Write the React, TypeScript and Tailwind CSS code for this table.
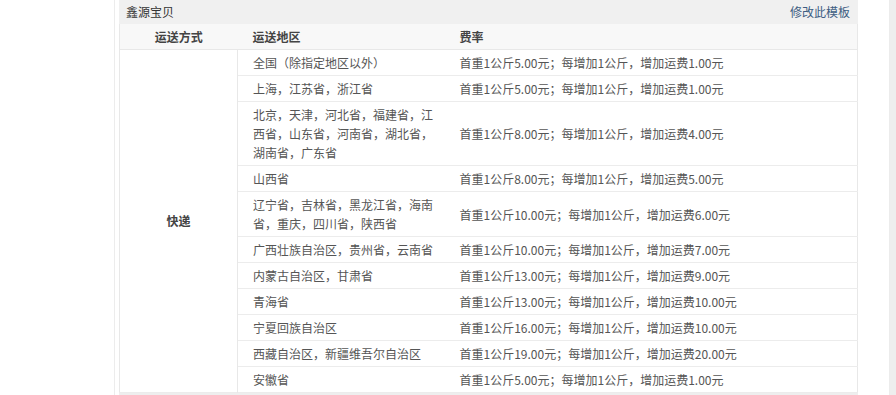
const rows: { area: string[]; fee: string }[] = [
  { area: ['全国（除指定地区以外）'], fee: '首重1公斤5.00元；每增加1公斤，增加运费1.00元' },
  { area: ['上海，江苏省，浙江省'], fee: '首重1公斤5.00元；每增加1公斤，增加运费1.00元' },
  {
    area: ['北京，天津，河北省，福建省，江', '西省，山东省，河南省，湖北省，', '湖南省，广东省'],
    fee: '首重1公斤8.00元；每增加1公斤，增加运费4.00元',
  },
  { area: ['山西省'], fee: '首重1公斤8.00元；每增加1公斤，增加运费5.00元' },
  {
    area: ['辽宁省，吉林省，黑龙江省，海南', '省，重庆，四川省，陕西省'],
    fee: '首重1公斤10.00元；每增加1公斤，增加运费6.00元',
  },
  { area: ['广西壮族自治区，贵州省，云南省'], fee: '首重1公斤10.00元；每增加1公斤，增加运费7.00元' },
  { area: ['内蒙古自治区，甘肃省'], fee: '首重1公斤13.00元；每增加1公斤，增加运费9.00元' },
  { area: ['青海省'], fee: '首重1公斤13.00元；每增加1公斤，增加运费10.00元' },
  { area: ['宁夏回族自治区'], fee: '首重1公斤16.00元；每增加1公斤，增加运费10.00元' },
  { area: ['西藏自治区，新疆维吾尔自治区'], fee: '首重1公斤19.00元；每增加1公斤，增加运费20.00元' },
  { area: ['安徽省'], fee: '首重1公斤5.00元；每增加1公斤，增加运费1.00元' },
];

export default function App() {
  return (
    <div
      className="flex h-[395px] w-[896px] overflow-hidden bg-white text-[12px] text-[#555]"
      style={{ fontFamily: '"Noto Sans CJK SC", "Noto Sans", sans-serif' }}
    >
      <div className="w-[114px] shrink-0" />
      <div className="flex w-[776px] shrink-0 border-r border-l border-[#ececec] pl-[4px]">
        <div className="flex w-[739px] flex-col">
          {/* title bar */}
          <div className="flex h-[24px] shrink-0 items-center justify-between bg-[#f0f0f0] pr-[8px] pl-[7px]">
            <span className="text-[#333]">鑫源宝贝</span>
            <span className="text-[#3d5d82]">修改此模板</span>
          </div>

          <table className="w-[739px] shrink-0 table-fixed border-collapse border-l border-r border-b border-[#e8e8e8]">
            <colgroup>
              <col className="w-[118px]" />
              <col className="w-[209px]" />
              <col />
            </colgroup>
            <thead>
              <tr className="border-b border-[#e8e8e8] bg-[#f8f8f8] text-[#444]">
                <th className="py-[3px] text-center leading-[19px] font-bold">运送方式</th>
                <th className="py-[3px] pl-[15px] text-left leading-[19px] font-bold">运送地区</th>
                <th className="py-[3px] pl-[13px] text-left leading-[19px] font-bold">费率</th>
              </tr>
            </thead>
            <tbody>
              {rows.map((r, i) => (
                <tr key={i} className="border-b border-[#ececec]">
                  {i === 0 && (
                    <td
                      rowSpan={rows.length}
                      className="border-r border-[#e8e8e8] text-center align-middle font-bold text-[#444]"
                    >
                      快递
                    </td>
                  )}
                  <td className="py-[3px] pl-[15px] align-middle leading-[19px] whitespace-nowrap">
                    {r.area.map((line, j) => (
                      <div key={j}>{line}</div>
                    ))}
                  </td>
                  <td className="py-[3px] pl-[13px] align-middle leading-[19px] whitespace-nowrap">{r.fee}</td>
                </tr>
              ))}
            </tbody>
          </table>
          <div className="h-[3px] shrink-0 bg-[#eeeeee]" />
        </div>
      </div>
      <div className="w-[6px] shrink-0 bg-[#eeeeee]" />
    </div>
  );
}
